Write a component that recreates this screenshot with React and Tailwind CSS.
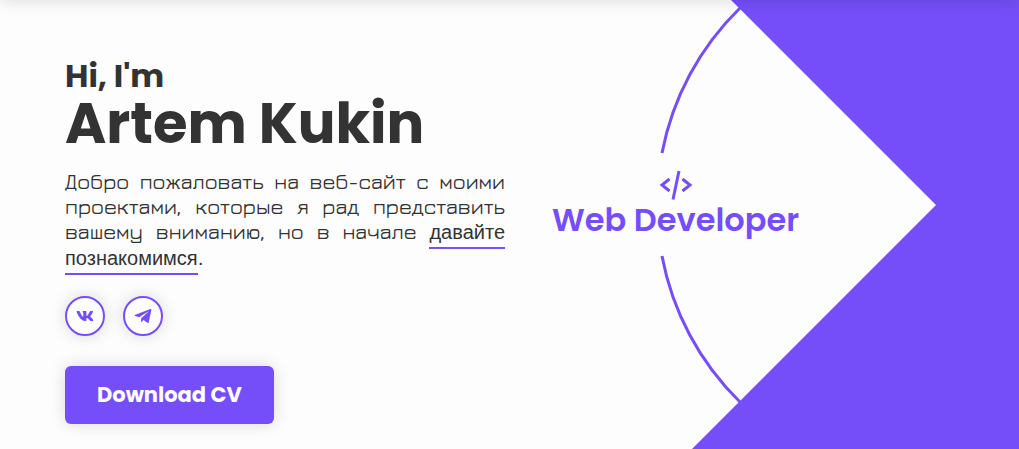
import { BiLogoTelegram, BiLogoVk } from "react-icons/bi";

const socials = [
  { label: "VK", href: "#vk", Icon: BiLogoVk },
  { label: "Telegram", href: "#telegram", Icon: BiLogoTelegram },
];

function Backdrop() {
  return (
    <svg className="absolute inset-0 h-full w-full" aria-hidden="true">
      <path
        d="M235 8 A275 275 0 0 0 157 153 M157 256 A275 275 0 0 0 235 402"
        fill="none"
        stroke="#754ef9"
        strokeWidth="3"
      />
      <polygon points="226,0 431,205 187,449 187,2000 3000,2000 3000,0" fill="#754ef9" />
    </svg>
  );
}

function CodeIcon() {
  return (
    <svg
      className="h-8 w-9"
      viewBox="0 0 36 32"
      fill="none"
      stroke="currentColor"
      strokeWidth="3"
      aria-hidden="true"
    >
      <path d="M11.5 10 4 16l7.5 6M24.5 10l7.500 6-7.500 6M21 2l-6 28.500" />
    </svg>
  );
}

function Intro() {
  return (
    <section className="w-[440px] shrink-0 pt-14 text-[#333]">
      <h1 className="font-bold">
        <span className="block text-[32px] leading-10">Hi, I'm</span>
        <span className="block text-[56px] leading-[56px]">Artem Kukin</span>
      </h1>
      <p className="mt-[17px] text-justify font-[Jura,'DejaVu_Sans',sans-serif] text-[21px] leading-[25px] font-medium">
        Добро пожаловать на веб-сайт с моими проектами, которые я рад представить вашему вниманию, но в
        начале{" "}
        <a
          href="#about"
          className="border-b-2 border-[#754ef9] pb-1 font-['Liberation_Sans',Arial,sans-serif] text-[20px] font-normal"
        >
          давайте познакомимся
        </a>
        <span className="font-['Liberation_Sans',Arial,sans-serif] font-normal">.</span>
      </p>
      <div className="mt-[25px] flex gap-[18px]">
        {socials.map(({ label, href, Icon }) => (
          <a
            key={label}
            href={href}
            aria-label={label}
            className="flex size-10 items-center justify-center rounded-full border-2 border-[#754ef9] text-xl text-[#754ef9] shadow-[0_0_16px_rgba(0,0,0,0.15)]"
          >
            <Icon />
          </a>
        ))}
      </div>
      <button
        type="button"
        className="mt-[30px] h-[58px] rounded-md bg-[#754ef9] px-8 text-[21px] font-bold text-[#fdfdfd] shadow-[0_0_16px_rgba(0,0,0,0.15)]"
      >
        Download CV
      </button>
    </section>
  );
}

export default function App() {
  return (
    <main className="relative flex min-h-screen overflow-hidden bg-[#fdfdfd] pl-[65px] font-[Poppins,Inter,sans-serif]">
      <Intro />
      <section className="relative flex-1">
        <Backdrop />
        <div className="relative ml-[47px] flex w-fit flex-col items-center pt-[169px] text-[#754ef9]">
          <CodeIcon />
          <h2 className="text-[32px] leading-[38px] font-semibold whitespace-nowrap">Web Developer</h2>
        </div>
      </section>
      <div className="absolute inset-x-0 -top-16 h-16 shadow-[0_0_16px_rgba(0,0,0,0.15)]" />
    </main>
  );
}
